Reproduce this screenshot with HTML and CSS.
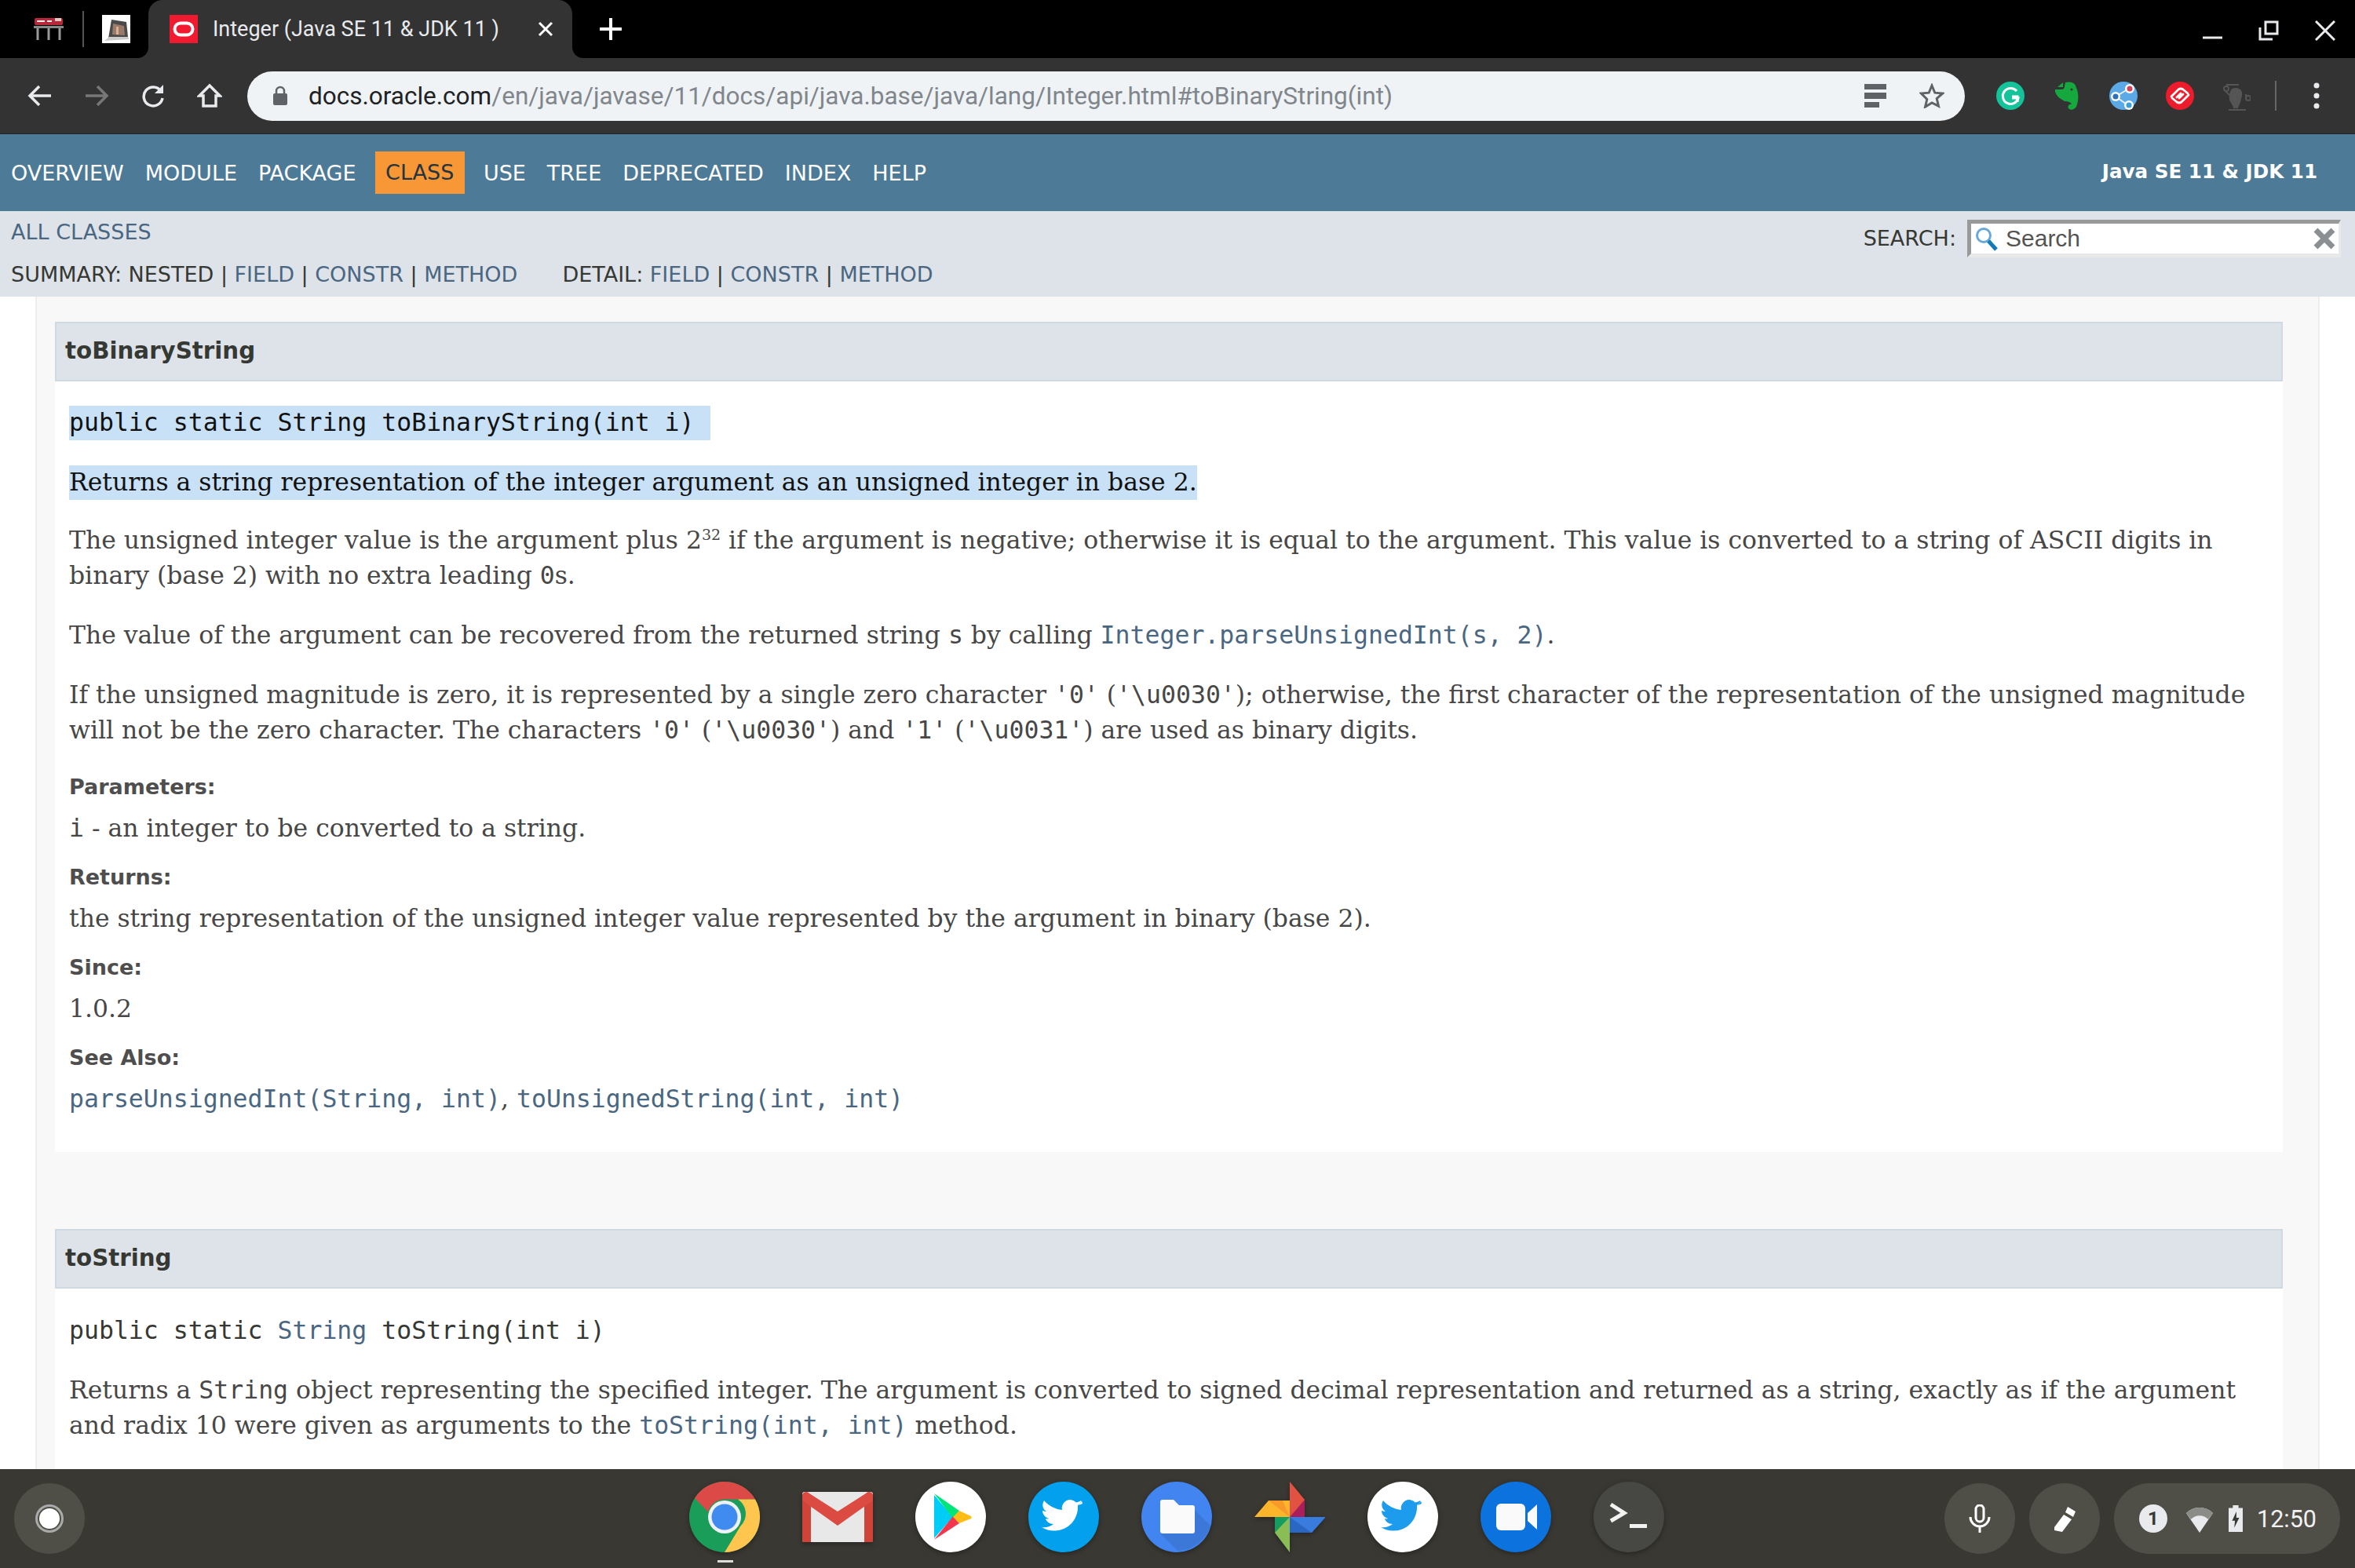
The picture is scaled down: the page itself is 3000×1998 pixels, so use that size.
FILE: index.html
```html
<!DOCTYPE html>
<html lang="en">
<head>
<meta charset="utf-8">
<title>Integer (Java SE 11 &amp; JDK 11 )</title>
<link rel="stylesheet" href="styles.css">
</head>
<body>
<header class="tabstrip">
  <div class="pinned">
    <svg class="pin-rail" viewBox="0 0 38 28" width="38" height="28"><rect x="1" y="0" width="36" height="9" rx="2" fill="#b5293a"/><rect x="27" y="0" width="8" height="4" fill="#e8c8c8"/><rect x="4" y="3" width="10" height="2" fill="#eee"/><rect x="17" y="3" width="6" height="2" fill="#eee"/><rect x="0" y="10" width="38" height="3" fill="#888"/><path d="M5 13v15M19 13v15M33 13v15" stroke="#999" stroke-width="3"/></svg>
    <span class="pin-sep"></span>
    <svg class="pin-photo" viewBox="0 0 36 36" width="36" height="36"><rect width="36" height="36" fill="#fff"/><path d="M8 30 12 6 31 9 33 28Z" fill="#4a4a4a"/><path d="M14 11 28 14 29 26 13 25Z" fill="#9a7a68"/><path d="M18 15h3v10h-3z" fill="#d9b090"/><path d="M3 33 9 28 33 28 35 31Z" fill="#ccc"/></svg>
  </div>
  <div class="tab">
    <svg class="favicon" viewBox="0 0 36 36" width="36" height="36"><rect width="36" height="36" fill="#f11a30"/><rect x="6.500" y="10.500" width="23" height="15" rx="7.500" fill="none" stroke="#fff" stroke-width="4"/></svg>
    <span class="tab-title">Integer (Java SE 11 &amp; JDK 11 )</span>
    <svg class="tab-close" viewBox="0 0 20 20" width="20" height="20"><path d="M2 2 18 18M18 2 2 18" stroke="#fff" stroke-width="3"/></svg>
  </div>
  <svg class="newtab" viewBox="0 0 28 28" width="28" height="28"><path d="M14 1v26M1 14h26" stroke="#fff" stroke-width="4" stroke-linecap="round"/></svg>
  <div class="winctl">
    <svg viewBox="0 0 25 24" width="25" height="24"><path d="M0 21h25" stroke="#e8eaed" stroke-width="3"/></svg>
    <svg viewBox="0 0 26 26" width="26" height="26"><path d="M9 2h15v15H9zM2 9v15h16" fill="none" stroke="#e8eaed" stroke-width="3"/></svg>
    <svg viewBox="0 0 26 26" width="26" height="26"><path d="M1 1 25 25M25 1 1 25" stroke="#e8eaed" stroke-width="3"/></svg>
  </div>
</header>

<div class="toolbar">
  <div class="navbtns">
    <svg viewBox="0 0 32 32" width="32" height="32"><path d="M30 16H3M15 4 3 16l12 12" fill="none" stroke="#e8eaed" stroke-width="3.500"/></svg>
    <svg viewBox="0 0 32 32" width="32" height="32"><path d="M2 16h27M17 4l12 12-12 12" fill="none" stroke="#777" stroke-width="3.500"/></svg>
    <svg viewBox="0 0 32 32" width="32" height="32"><path d="M26 10a12 12 0 1 0 2 9" fill="none" stroke="#e8eaed" stroke-width="3.500"/><path d="M29 2v11H18z" fill="#e8eaed"/></svg>
    <svg viewBox="0 0 32 32" width="32" height="32"><path d="M16 3 3 16h5v13h16V16h5zM8 29" fill="none" stroke="#e8eaed" stroke-width="3.500"/></svg>
  </div>
  <div class="omnibox">
    <svg class="lock" viewBox="0 0 20 26" width="20" height="26"><rect x="1" y="10" width="18" height="15" rx="2" fill="#5f6368"/><path d="M5 11V7a5 5 0 0 1 10 0v4" fill="none" stroke="#5f6368" stroke-width="2.500"/></svg>
    <span class="url"><span class="host">docs.oracle.com</span>/en/java/javase/11/docs/api/java.base/java/lang/Integer.html#toBinaryString(int)</span>
    <svg class="omni-list" viewBox="0 0 28 30" width="28" height="30"><path d="M0 0h28v7H0zM0 11h28v8H0zM0 23h19v7H0z" fill="#5f6368"/></svg>
    <svg class="omni-star" viewBox="0 0 32 32" width="32" height="32"><path d="M16 3l3.800 9.200 9.900.8-7.500 6.500 2.300 9.700L16 25l-8.500 5.200 2.300-9.700L2.300 13l9.900-.8z" fill="none" stroke="#5f6368" stroke-width="3"/></svg>
  </div>
  <div class="exts">
    <svg viewBox="0 0 36 36" width="36" height="36"><circle cx="18" cy="18" r="18" fill="#15c39a"/><path d="M26 12a10 10 0 1 0 2 9h-8" fill="none" stroke="#fff" stroke-width="3"/><path d="M27 26v-7h-7" fill="none" stroke="#fff" stroke-width="3"/></svg>
    <svg viewBox="0 0 32 38" width="36" height="38"><path d="M14 2C22 0 27 3 28 9c3 6 3 15 1 21-1 6-7 8-10 6-3-2-1-7 3-6-1-3-5-4-9-4-5-3-10-6-12-12v-3h8q4 0 4-4zM11 2v6H4z" fill="#14a83f"/><circle cx="22" cy="11" r="1.500" fill="#333"/></svg>
    <svg viewBox="0 0 36 36" width="36" height="36"><circle cx="18" cy="18" r="18" fill="#5ba9e6"/><path d="M8 19 25 9M8 19l17 12" stroke="#e8f2fa" stroke-width="2"/><circle cx="8" cy="19" r="6" fill="#fff"/><circle cx="26" cy="9" r="6" fill="#fff"/><circle cx="25" cy="30" r="6" fill="#fff"/><circle cx="26" cy="9" r="3.500" fill="#d0445a"/><circle cx="8" cy="19" r="3.500" fill="#2f6fb8"/><circle cx="25" cy="30" r="3.500" fill="#3aa0dc"/></svg>
    <svg viewBox="0 0 36 36" width="36" height="36"><circle cx="18" cy="18" r="18" fill="#ec1c2d"/><path d="M7 19 16 10q3-2 6 0l6 5M29 17 20 26q-3 2-6 0l-6-5M14 20l5-5M22 16l-5 5" fill="none" stroke="#fff" stroke-width="2.800" stroke-linecap="round"/></svg>
    <svg viewBox="0 0 36 40" width="36" height="40"><path d="M13 12c8-3 12 2 11 8-1 7-3 11-5 15h-4c-1-6-7-8-5-15 0-3 1-6 3-8zM8 38h22" fill="#555" stroke="#555" stroke-width="2"/><path d="M5 6h16M30 18v4M4 14l6 6" stroke="#555" stroke-width="2" fill="none"/><circle cx="5" cy="11" r="3" fill="none" stroke="#555" stroke-width="2"/><circle cx="33" cy="23" r="3" fill="none" stroke="#555" stroke-width="2"/></svg>
    <span class="ext-sep"></span>
    <svg class="ext-menu" viewBox="0 0 8 34" width="8" height="34"><circle cx="4" cy="4" r="3.500" fill="#e8eaed"/><circle cx="4" cy="17" r="3.500" fill="#e8eaed"/><circle cx="4" cy="30" r="3.500" fill="#e8eaed"/></svg>
  </div>
</div>

<nav class="topnav">
  <ul class="navlist">
    <li>OVERVIEW</li><li>MODULE</li><li>PACKAGE</li><li class="active">CLASS</li><li>USE</li><li>TREE</li><li>DEPRECATED</li><li>INDEX</li><li>HELP</li>
  </ul>
  <strong class="about">Java SE 11 &amp; JDK 11</strong>
</nav>

<div class="subnav">
  <div class="sub-left">
    <a class="link">ALL CLASSES</a>
    <div class="sub-row">
      <span>SUMMARY: NESTED | <a class="link">FIELD</a> | <a class="link">CONSTR</a> | <a class="link">METHOD</a></span>
      <span>DETAIL: <a class="link">FIELD</a> | <a class="link">CONSTR</a> | <a class="link">METHOD</a></span>
    </div>
  </div>
  <div class="search">
    <label class="search-label">SEARCH:</label>
    <div class="search-box">
      <svg class="search-glass" viewBox="0 0 30 34" width="30" height="34"><circle cx="12" cy="13" r="8.500" fill="none" stroke="#6aa8d8" stroke-width="3"/><path d="M18 20l10 11" stroke="#1379b8" stroke-width="5"/></svg>
      <span class="search-text">Search</span>
      <svg class="search-x" viewBox="0 0 28 28" width="28" height="28"><path d="M3 3 25 25M25 3 3 25" stroke="#8a8f93" stroke-width="7"/></svg>
    </div>
  </div>
</div>

<main class="content">
  <div class="gutter">
    <section class="member">
      <h4 class="member-title">toBinaryString</h4>
      <div class="member-body">
        <pre class="sig sel sel-sig">public static String toBinaryString(int i)</pre>
        <p class="para sel">Returns a string representation of the integer argument as an unsigned integer in base 2.</p>
        <p class="para">The unsigned integer value is the argument plus 2<sup class="sup">32</sup> if the argument is negative; otherwise it is equal to the argument. This value is converted to a string of ASCII digits in binary (base 2) with no extra leading <code>0</code>s.</p>
        <p class="para">The value of the argument can be recovered from the returned string <code>s</code> by calling <a class="link"><code>Integer.parseUnsignedInt(s, 2)</code></a>.</p>
        <p class="para">If the unsigned magnitude is zero, it is represented by a single zero character <code>'0'</code> (<code>'\u0030'</code>); otherwise, the first character of the representation of the unsigned magnitude will not be the zero character. The characters <code>'0'</code> (<code>'\u0030'</code>) and <code>'1'</code> (<code>'\u0031'</code>) are used as binary digits.</p>
        <dl class="tags">
          <dt>Parameters:</dt>
          <dd><code>i</code> - an integer to be converted to a string.</dd>
          <dt>Returns:</dt>
          <dd>the string representation of the unsigned integer value represented by the argument in binary (base 2).</dd>
          <dt>Since:</dt>
          <dd>1.0.2</dd>
          <dt>See Also:</dt>
          <dd><a class="link"><code>parseUnsignedInt(String, int)</code></a>, <a class="link"><code>toUnsignedString(int, int)</code></a></dd>
        </dl>
      </div>
    </section>
    <section class="member member-next">
      <h4 class="member-title">toString</h4>
      <div class="member-body">
        <pre class="sig">public static <a class="link">String</a> toString(int i)</pre>
        <p class="para">Returns a <code>String</code> object representing the specified integer. The argument is converted to signed decimal representation and returned as a string, exactly as if the argument and radix 10 were given as arguments to the <a class="link"><code>toString(int, int)</code></a> method.</p>
      </div>
    </section>
  </div>
</main>

<footer class="shelf">
  <div class="launcher"><span class="launcher-dot"></span></div>
  <div class="apps">
    <span class="app app-active"><svg viewBox="0 0 90 90" width="90" height="90"><circle cx="45" cy="45" r="45" fill="#1a9d58"/><path d="M45 0a45 45 0 0 1 39 22.500H45a22 22 0 0 0-21 16L7 21A45 45 0 0 1 45 0z" fill="#db4a46"/><path d="M84 22.500A45 45 0 0 1 45 90l20-33a22 22 0 0 0-3-34.500z" fill="#fec64f"/><circle cx="45" cy="45" r="21" fill="#eef2f7"/><circle cx="45" cy="45" r="16.500" fill="#3f8bf0"/></svg></span>
    <span class="app"><svg viewBox="0 0 92 66" width="92" height="66"><rect x="1" y="1" width="90" height="64" rx="3" fill="#e8e8e8"/><path d="M1 4h11v61H3a2 2 0 0 1-2-2zM80 4h11v59a2 2 0 0 1-2 2h-9z" fill="#cf4339"/><path d="M1 6a5 5 0 0 1 9-3l36 23L82 3a5 5 0 0 1 9 3v6L46 44 1 12z" fill="#db4b42"/></svg></span>
    <span class="app"><svg viewBox="0 0 90 90" width="90" height="90"><circle cx="45" cy="45" r="45" fill="#fff"/><path d="M24 17 24 45 24 72 48 45z" fill="#00cdf7"/><path d="M24 15 56 37 48 47z" fill="#00e57a"/><path d="M24 74 56 53 48 44z" fill="#f5354d"/><path d="M56 37 71 44a2 2 0 0 1 0 3L56 53 48 45z" fill="#fdbd16"/></svg></span>
    <span class="app"><svg viewBox="0 0 90 90" width="90" height="90"><circle cx="45" cy="45" r="45" fill="#03a0ee"/><path d="M69 28c-2 1-4 1.500-6 2 2-1 4-3 4.500-6-2 1-4 2-6.500 2.500a10.500 10.500 0 0 0-18 9.500C34 35 26 31 20 24c-3 5-2 11 3 14-2 0-3-.5-5-1 0 5 4 9 8.500 10-1.500.5-3 .5-4.500 0 1 4 5 7 10 7-4 3-9 5-15 4 5 3 10 4.500 16 4.500 20 0 31-17 30-32 2-1.500 4-3.500 5-6z" fill="#fff"/></svg></span>
    <span class="app"><svg viewBox="0 0 90 90" width="90" height="90"><circle cx="45" cy="45" r="45" fill="#4285f0"/><path d="M24 66 46 88A45 45 0 0 0 88 56L68 36z" fill="#3c78d8"/><path d="M24 26a3 3 0 0 1 3-3h14l7 7h17a3 3 0 0 1 3 3v30a3 3 0 0 1-3 3H27a3 3 0 0 1-3-3z" fill="#fafafa"/></svg></span>
    <span class="app"><svg viewBox="0 0 90 90" width="90" height="90"><path d="M45 45V0l19 23v22z" fill="#e25243"/><path d="M64 23v22H45z" fill="#a91f5c"/><path d="M45 45h46L73 65H45z" fill="#3a7bde"/><path d="M45 45h-.5L73 65H45z" fill="#2a66c4"/><path d="M45 45v45L26 65V45z" fill="#8bbd56"/><path d="M26 65V45h19z" fill="#169c5f"/><path d="M45 45H0l18-21h27z" fill="#fdb62c"/><path d="M18 24h18l9 21z" fill="#f79a2a"/></svg></span>
    <span class="app"><svg viewBox="0 0 90 90" width="90" height="90"><circle cx="45" cy="45" r="45" fill="#fff"/><path d="M69 28c-2 1-4 1.500-6 2 2-1 4-3 4.500-6-2 1-4 2-6.500 2.500a10.500 10.500 0 0 0-18 9.500C34 35 26 31 20 24c-3 5-2 11 3 14-2 0-3-.5-5-1 0 5 4 9 8.500 10-1.500.5-3 .5-4.500 0 1 4 5 7 10 7-4 3-9 5-15 4 5 3 10 4.500 16 4.500 20 0 31-17 30-32 2-1.500 4-3.500 5-6z" fill="#1d9ced"/></svg></span>
    <span class="app"><svg viewBox="0 0 90 90" width="90" height="90"><circle cx="45" cy="45" r="45" fill="#0c72de"/><rect x="20" y="28" width="37" height="34" rx="6" fill="#fafafa"/><path d="M60 40 72 29v32L60 50z" fill="#fafafa"/></svg></span>
    <span class="app"><svg viewBox="0 0 90 90" width="90" height="90"><circle cx="45" cy="45" r="45" fill="#474744"/><path d="M22 29 39 40 22 50" fill="none" stroke="#f2f2f2" stroke-width="5"/><rect x="46" y="54" width="22" height="5" fill="#f2f2f2"/></svg></span>
  </div>
  <div class="tray">
    <div class="tray-btn"><svg viewBox="0 0 28 36" width="28" height="36"><rect x="9" y="1" width="10" height="21" rx="5" fill="none" stroke="#fff" stroke-width="3"/><path d="M2 16a12 12 0 0 0 24 0M14 28v8" fill="none" stroke="#fff" stroke-width="3"/></svg></div>
    <div class="tray-btn"><svg viewBox="0 0 29 33" width="29" height="33"><path d="M18 1l10 6-3 7-10-6zM13 11l10 6-12 16-10-2v-4z" fill="#fff"/></svg></div>
    <div class="tray-status">
      <span class="badge">1</span>
      <svg viewBox="0 0 34 36" width="34" height="36"><path d="M0 11a24 24 0 0 1 34 0L17 36z" fill="#e8eaed"/><path d="M0 11a24 24 0 0 1 34 0l-6 8a15 15 0 0 0-22 0z" fill="#8b8c88"/></svg>
      <svg class="battery" viewBox="0 0 20 38" width="18" height="38"><path d="M6 0h8v4h6v34H0V4h6z" fill="#e8eaed"/><path d="M11 9 5 22h4l-1 10 7-14h-4z" fill="#3a3832"/></svg>
      <span class="clock">12:50</span>
    </div>
  </div>
</footer>
</body>
</html>
```
FILE: styles.css
```css
* { box-sizing: border-box; }
html, body { margin: 0; padding: 0; }
body { width: 3000px; height: 1998px; display: flex; flex-direction: column; overflow: hidden; background: #fff; font-family: "DejaVu Sans", sans-serif; }
svg { display: block; flex: none; }

.tabstrip { height: 74px; background: #000; display: flex; align-items: center; flex: none; }
.pinned { display: flex; align-items: center; width: 189px; padding-left: 43px; }
.pin-sep { width: 2px; height: 46px; background: #555; margin: 0 23px 0 24px; }
.tab { position: relative; width: 540px; height: 74px; background: #333; border-radius: 18px 18px 0 0; display: flex; align-items: center; padding: 0 18px 0 27px; }
.tab::before, .tab::after { content: ""; position: absolute; bottom: 0; width: 14px; height: 14px; }
.tab::before { left: -14px; background: radial-gradient(circle at 0 0, #000 13.500px, #333 14.500px); }
.tab::after { right: -14px; background: radial-gradient(circle at 100% 0, #000 13.500px, #333 14.500px); }
.tab-title { font: 27px "Roboto", sans-serif; color: #e8eaed; margin-left: 19px; flex: 1; white-space: nowrap; }
.tab-close { margin-right: 6px; }
.newtab { margin-left: 35px; }
.winctl { margin-left: auto; display: flex; align-items: center; gap: 46px; padding: 3px 25px 0 0; }

.toolbar { height: 97px; background: #333; display: flex; align-items: center; flex: none; border-bottom: 1px solid #222; }
.navbtns { display: flex; gap: 40px; width: 315px; padding-left: 35px; align-items: center; }
.omnibox { width: 2188px; height: 63px; background: #eff3f5; border-radius: 32px; display: flex; align-items: center; padding: 0 26px 0 32px; }
.lock { margin-right: 26px; }
.url { font: 31.500px "Roboto", sans-serif; color: #80868b; flex: 1; white-space: nowrap; }
.host { color: #202124; }
.omni-list { margin-right: 42px; }
.exts { display: flex; align-items: center; margin-left: 40px; gap: 36px; }
.ext-sep { width: 2px; height: 38px; background: #666; margin-left: -5px; }
.ext-menu { margin-left: 11px; }

.topnav { height: 98px; background: #4d7a97; display: flex; align-items: center; justify-content: space-between; flex: none; padding: 0 48px 0 14px; }
.navlist { list-style: none; margin: 0; padding: 0; display: flex; gap: 27px; align-items: center; color: #fff; font-size: 27px; }
.navlist .active { background: #f89735; color: #253441; height: 54px; line-height: 54px; padding: 0 13.500px; margin: 0 -3px; }
.about { color: #fff; font-size: 24.600px; font-weight: bold; padding-bottom: 4px; }

.subnav { height: 109px; background: #dee3e9; flex: none; display: flex; justify-content: space-between; padding: 0 18px 0 14px; color: #353833; font-size: 27px; line-height: 32px; }
.sub-left { display: flex; flex-direction: column; padding-top: 11px; gap: 22px; }
.sub-row { display: flex; gap: 57px; }
.link { color: #4a6782; }
.search { display: flex; gap: 14px; padding-top: 11px; align-items: flex-start; }
.search-label { line-height: 48px; }
.search-box { width: 476px; height: 48px; background: #fff; border-style: solid; border-width: 5px 3px 5px 5px; border-color: #999 #e9e9e9 #e9e9e9 #999; display: flex; align-items: center; padding: 0 4px; }
.search-text { font: 30px "Liberation Sans", sans-serif; color: #545454; margin-left: 10px; flex: 1; }

.content { flex: 1; min-height: 0; overflow: hidden; padding: 0 45px; }
.gutter { background: #f8f8f8; padding: 32px 45px 0 23px; height: 100%; border-left: 2px solid #eee; border-right: 2px solid #eee; }
.member { background: #fff; padding-bottom: 24px; }
.member-next { margin-top: 98px; padding-bottom: 60px; }
.member-title { margin: 0; height: 76px; background: #dee3e9; border: 2px solid #d0d9e0; padding: 0 11px; font: bold 29.300px/70px "DejaVu Sans", sans-serif; color: #353833; }
.member-body { padding: 31px 14px 0 18px; color: #474747; font: 31.440px/45px "DejaVu Serif", serif; }
.sig { margin: 0 0 31px; font: 31.500px/45px "DejaVu Sans Mono", monospace; color: #353833; }
.sel { display: block; width: fit-content; background: #c8e1f7; color: #111; line-height: 42px; padding-bottom: 2px; }
.sig.sel { margin-bottom: 32px; line-height: 42px; }
.para.sel { margin-bottom: 29px; }
.sel-sig { padding-right: 20px; }
.para { margin: 0 0 31px; }
.para code, .tags code { font: 31.500px/45px "DejaVu Sans Mono", monospace; }
.sup { font-size: 19px; line-height: 0; }
.tags { margin: 0; }
.tags dt { font: bold 27px/38px "DejaVu Sans", sans-serif; color: #4e4e4e; margin: 0 0 11px; }
.tags dd { margin: 0 0 21px; }

.shelf { height: 126px; background: #3a3832; flex: none; display: flex; align-items: center; padding: 0 19px 0 18px; }
.launcher { width: 90px; height: 90px; border-radius: 50%; background: #4f4e47; display: flex; align-items: center; justify-content: center; }
.launcher-dot { width: 26px; height: 26px; border-radius: 50%; background: #fff; box-shadow: 0 0 0 2px #4f4e47, 0 0 0 5px #aaa; }
.apps { display: flex; gap: 54px; margin: -4px 0 0 770px; align-items: center; }
.app { position: relative; width: 90px; height: 90px; display: flex; align-items: center; justify-content: center; }
.app svg { filter: drop-shadow(0 2px 3px rgba(0, 0, 0, 0.35)); }
.app-active::after { content: ""; position: absolute; left: 36px; bottom: -13px; width: 20px; height: 3px; background: #ddd; }
.tray { margin-left: auto; display: flex; gap: 18px; align-items: center; }
.tray-btn { width: 90px; height: 90px; border-radius: 45px; background: #4f4e47; display: flex; align-items: center; justify-content: center; }
.tray-status { width: 288px; height: 90px; border-radius: 45px; background: #4f4e47; display: flex; align-items: center; padding-left: 32px; gap: 24px; }
.badge { width: 36px; height: 36px; border-radius: 50%; background: #e8eaed; color: #3a3832; font: bold 24px/36px "Roboto", sans-serif; text-align: center; }
.battery { margin-left: -4px; }
.clock { font: 30.500px "Roboto", sans-serif; color: #f1f1f1; margin-left: -6px; }
```
